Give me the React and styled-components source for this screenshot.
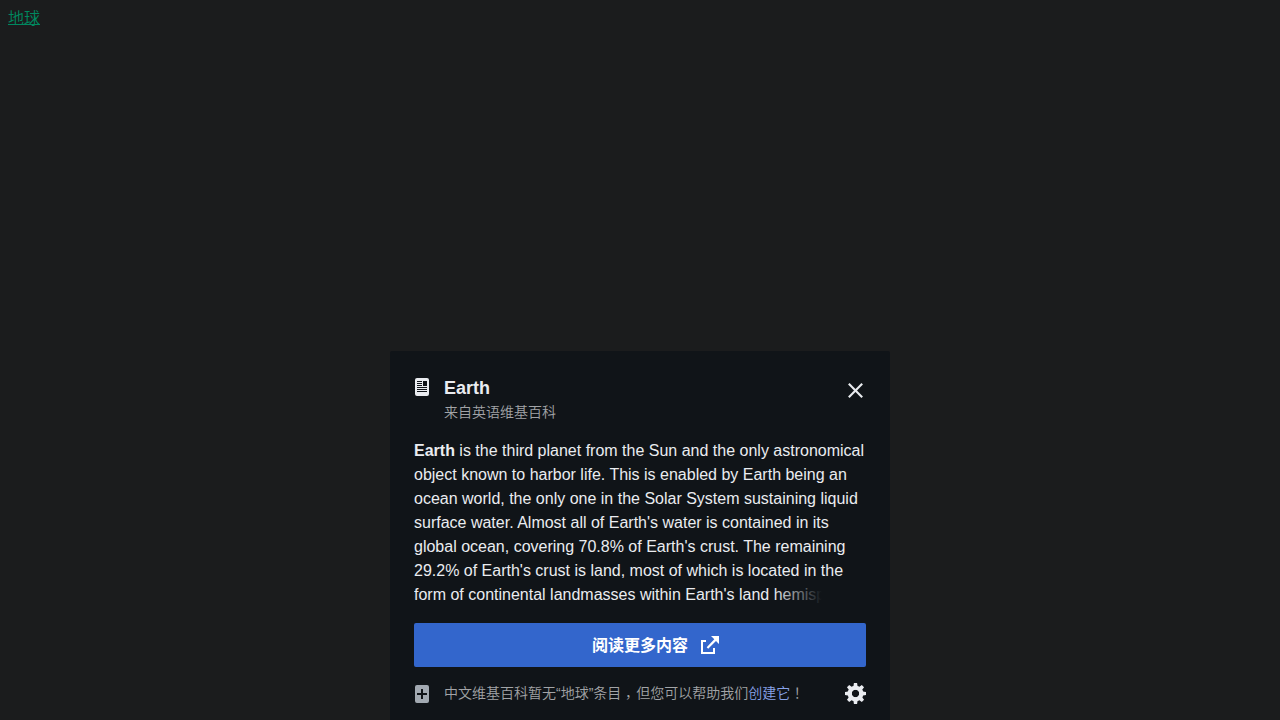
import React from "react";
import styled, { createGlobalStyle } from "styled-components";

const Global = createGlobalStyle`
  html { background: #1b1c1d; }
  body {
    margin: 0;
    font-family: "Liberation Sans", "Noto Sans CJK SC", sans-serif;
    overflow: hidden;
  }
`;
const Page = styled.main`
  box-sizing: border-box;
  height: 100vh;
  padding: 8px;
  display: flex;
  flex-direction: column;
  font-size: 16px;
`;
const TopicLink = styled.a`
  align-self: flex-start;
  line-height: 22px;
  color: #00875f;
  font-weight: 350;
  text-decoration: underline;
  text-underline-offset: 0;
`;
const Sheet = styled.section`
  box-sizing: border-box;
  width: 500px;
  height: 369px;
  margin: auto auto -8px;
  padding: 24px 24px 0;
  background: #101418;
  border-radius: 2px 2px 0 0;
`;
const Header = styled.header`
  display: flex;
  align-items: flex-start;
  height: 64px;
`;
const ArticleMark = styled.svg`
  width: 14px;
  height: 18px;
  margin: 3px 15px 0 1px;
  fill: #eaecf0;
`;
const MissingMark = styled(ArticleMark)`
  margin-top: 2px;
  fill: #a2a9b1;
`;
const Heading = styled.div`
  flex: 1;
`;
const Title = styled.h1`
  margin: 0;
  font-size: 18px;
  line-height: 26px;
  color: #eaecf0;
`;
const Source = styled.div`
  font-size: 14px;
  font-weight: 350;
  line-height: 22px;
  color: #a2a4a7;
`;
const IconButton = styled.button`
  display: flex;
  padding: 0;
  border: 0;
  background: none;
  color: #eaecf0;
  cursor: pointer;
`;
const CloseButton = styled(IconButton)`
  margin: 5px 0 0;
`;
const Extract = styled.p`
  position: relative;
  margin: 0;
  height: 168px;
  overflow: hidden;
  font-size: 16px;
  line-height: 24px;
  color: #eaecf0;
  white-space: nowrap;
`;
const Fade = styled.span`
  position: absolute;
  right: 0;
  bottom: 0;
  width: 92px;
  height: 24px;
  background: linear-gradient(to right, rgba(16, 20, 24, 0), #101418 52%);
`;
const ReadMore = styled.a`
  display: flex;
  align-items: center;
  justify-content: center;
  gap: 13px;
  height: 44px;
  margin-top: 16px;
  padding-left: 31px;
  box-sizing: border-box;
  border-radius: 2px;
  background: #3366cc;
  color: #fff;
  font-size: 16px;
  font-weight: 700;
`;
const ReadMoreLabel = styled.span`
  padding-bottom: 3px;
`;
const Footer = styled.footer`
  display: flex;
  align-items: center;
  height: 52px;
`;
const Notice = styled.span`
  flex: 1;
  padding-bottom: 2px;
  font-size: 14px;
  font-weight: 350;
  color: #a2a4a7;
`;
const CreateLink = styled.a`
  color: #88a3e8;
`;
const Comma = styled.span`
  display: inline-block;
  width: 15px;
  line-height: 0;
  vertical-align: -4px;
  font-family: "Noto Sans CJK TC", sans-serif;
`;
const Exclamation = styled.span`
  font-family: "Noto Sans CJK JP", sans-serif;
`;

export default function App() {
  return (
    <Page>
      <Global />
      <TopicLink>地球</TopicLink>
      <Sheet>
        <Header>
          <ArticleMark viewBox="0 0 14 18">
            <path fillRule="evenodd" d="M2 0a2 2 0 0 0-2 2v14a2 2 0 0 0 2 2h10a2 2 0 0 0 2-2V2a2 2 0 0 0-2-2zM2 3h5v1H2zm0 2h5v1H2zm0 2h5v1H2zm6-4h4v5H8zM2 9h10v1H2zm0 2h10v1H2zm0 2h10v1H2z" />
          </ArticleMark>
          <Heading>
            <Title>Earth</Title>
            <Source>来自英语维基百科</Source>
          </Heading>
          <CloseButton aria-label="关闭">
            <svg width="21" height="21" viewBox="0 0 20 20" fill="currentColor">
              <path d="m4.34 2.93 12.73 12.73-1.41 1.41L2.93 4.35z" />
              <path d="M17.07 4.34 4.34 17.07l-1.41-1.41L15.66 2.93z" />
            </svg>
          </CloseButton>
        </Header>
        <Extract>
          <b>Earth</b> is the third planet from the Sun and the only astronomical<br />
          object known to harbor life. This is enabled by Earth being an<br />
          ocean world, the only one in the Solar System sustaining liquid<br />
          surface water. Almost all of Earth's water is contained in its<br />
          global ocean, covering 70.8% of Earth's crust. The remaining<br />
          29.2% of Earth's crust is land, most of which is located in the<br />
          form of continental landmasses within Earth's land hemisphere
          <Fade />
        </Extract>
        <ReadMore>
          <ReadMoreLabel>阅读更多内容</ReadMoreLabel>
          <svg width="18" height="18" viewBox="0 0 18 18" fill="currentColor">
            <path d="M0 4h5v2H2v10h10v-4h2v6H0z" />
            <path d="M10 0h8v8l-3-3-7.8 7.8-1.5-1.5L13.3 3.3z" />
          </svg>
        </ReadMore>
        <Footer>
          <MissingMark viewBox="0 0 14 18">
            <path fillRule="evenodd" d="M2 0a2 2 0 0 0-2 2v14a2 2 0 0 0 2 2h10a2 2 0 0 0 2-2V2a2 2 0 0 0-2-2zm10 10H8v4H6v-4H2V8h4V4h2v4h4z" />
          </MissingMark>
          <Notice>中文维基百科暂无“地球”条目<Comma>，</Comma>但您可以帮助我们<CreateLink>创建它</CreateLink><Exclamation>！</Exclamation></Notice>
          <IconButton aria-label="设置">
            <svg width="21" height="21" viewBox="0 0 20 20" fill="currentColor">
              <g transform="translate(10 10)">
                {[0, 45, 90, 135].map((angle) => (
                  <path key={angle} transform={`rotate(${angle})`} d="M1.5-10h-3l-1 6.5h5m0 7h-5l1 6.5h3" />
                ))}
              </g>
              <path d="M10 2.5a7.5 7.5 0 0 0 0 15 7.5 7.5 0 0 0 0-15v4a3.5 3.5 0 0 1 0 7 3.5 3.5 0 0 1 0-7" />
            </svg>
          </IconButton>
        </Footer>
      </Sheet>
    </Page>
  );
}
